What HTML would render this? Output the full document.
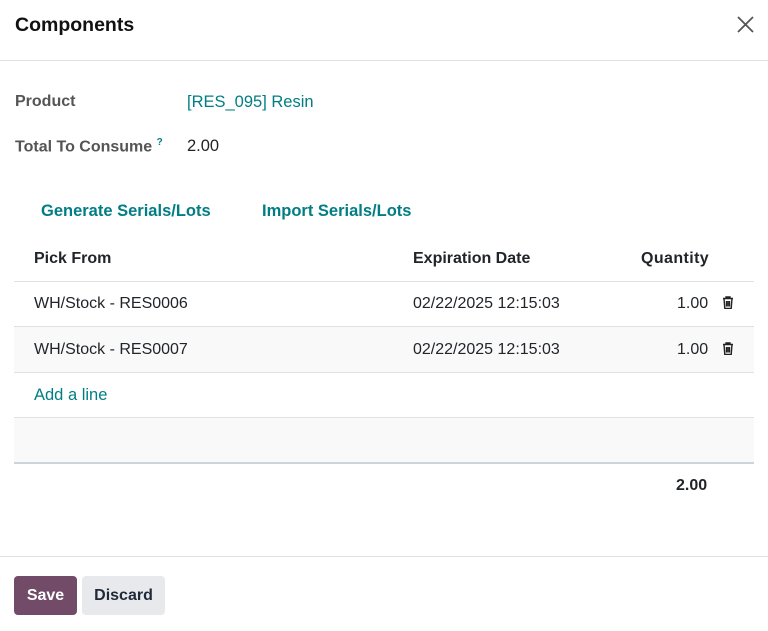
<!DOCTYPE html>
<html><head><style>
*{box-sizing:border-box;margin:0;padding:0}
body{width:768px;height:631px;background:#fff;font-family:"Liberation Sans",sans-serif;color:#212529;position:relative;overflow:hidden;font-size:16px}
.a{position:absolute;white-space:nowrap}
.teal{color:#017e84}
.hr{position:absolute;left:14px;width:740px;height:1px;background:#dee2e6}
</style></head><body>
<div class="a" style="left:15px;top:14px;font-size:19.5px;font-weight:bold;color:#111">Components</div>
<svg class="a" style="left:736px;top:15px" width="19" height="19" viewBox="0 0 19 19"><path d="M2 2L17 17M17 2L2 17" stroke="#555" stroke-width="1.8"/></svg>
<div class="a" style="left:0;top:60px;width:768px;height:1px;background:#dee2e6"></div>
<div class="a" style="left:15px;top:93px;color:#555;font-weight:bold">Product</div>
<div class="a teal" style="left:187px;top:93px;font-size:16.5px">[RES_095] Resin</div>
<div class="a" style="left:15px;top:137px;color:#555;font-weight:bold">Total To Consume <sup style="color:#017e84;font-size:10px">?</sup></div>
<div class="a" style="left:187px;top:137px;font-size:16.5px">2.00</div>
<div class="a teal" style="left:41px;top:202px;font-weight:bold;font-size:16.5px">Generate Serials/Lots</div>
<div class="a teal" style="left:262px;top:202px;font-weight:bold;font-size:16.5px">Import Serials/Lots</div>
<div class="a" style="left:34px;top:250px;font-weight:bold">Pick From</div>
<div class="a" style="left:413px;top:250px;font-weight:bold">Expiration Date</div>
<div class="a" style="left:641px;top:250px;font-weight:bold;letter-spacing:0.4px">Quantity</div>
<div class="hr" style="top:281px"></div>
<div class="a" style="left:14px;top:327px;width:740px;height:45px;background:#f9f9fa"></div>
<div class="a" style="left:34px;top:295px">WH/Stock - RES0006</div>
<div class="a" style="left:413px;top:295px">02/22/2025 12:15:03</div>
<div class="a" style="left:677px;top:295px">1.00</div>
<div class="hr" style="top:326px"></div>
<div class="a" style="left:34px;top:341px">WH/Stock - RES0007</div>
<div class="a" style="left:413px;top:341px">02/22/2025 12:15:03</div>
<div class="a" style="left:677px;top:341px">1.00</div>
<svg class="a" style="left:722px;top:296px" width="12" height="13" viewBox="0 0 12 13"><path d="M1 2.5h10M4 2.5V1h4v1.5M2 2.5l.8 10h6.4l.8-10M4.5 5v5.5M6 5v5.5M7.5 5v5.5" stroke="#222" stroke-width="1.4" fill="none"/></svg>
<svg class="a" style="left:722px;top:342px" width="12" height="13" viewBox="0 0 12 13"><path d="M1 2.5h10M4 2.5V1h4v1.5M2 2.5l.8 10h6.4l.8-10M4.5 5v5.5M6 5v5.5M7.5 5v5.5" stroke="#222" stroke-width="1.4" fill="none"/></svg>
<div class="hr" style="top:372px"></div>
<div class="a teal" style="left:34px;top:386px;font-size:16.5px">Add a line</div>
<div class="hr" style="top:417px"></div>
<div class="a" style="left:14px;top:418px;width:740px;height:44px;background:#f9f9fa"></div>
<div class="a" style="left:14px;top:462px;width:740px;height:2px;background:#ced4da"></div>
<div class="a" style="left:676px;top:477px;font-weight:bold">2.00</div>
<div class="a" style="left:0;top:556px;width:768px;height:1px;background:#dee2e6"></div>
<div class="a" style="left:14px;top:576px;width:63px;height:39px;background:#714b67;border-radius:4px;color:#fff;font-weight:bold;text-align:center;line-height:39px">Save</div>
<div class="a" style="left:82px;top:576px;width:83px;height:39px;background:#e7e9ed;border-radius:4px;color:#1f2937;font-weight:bold;text-align:center;line-height:39px">Discard</div>
</body></html>
